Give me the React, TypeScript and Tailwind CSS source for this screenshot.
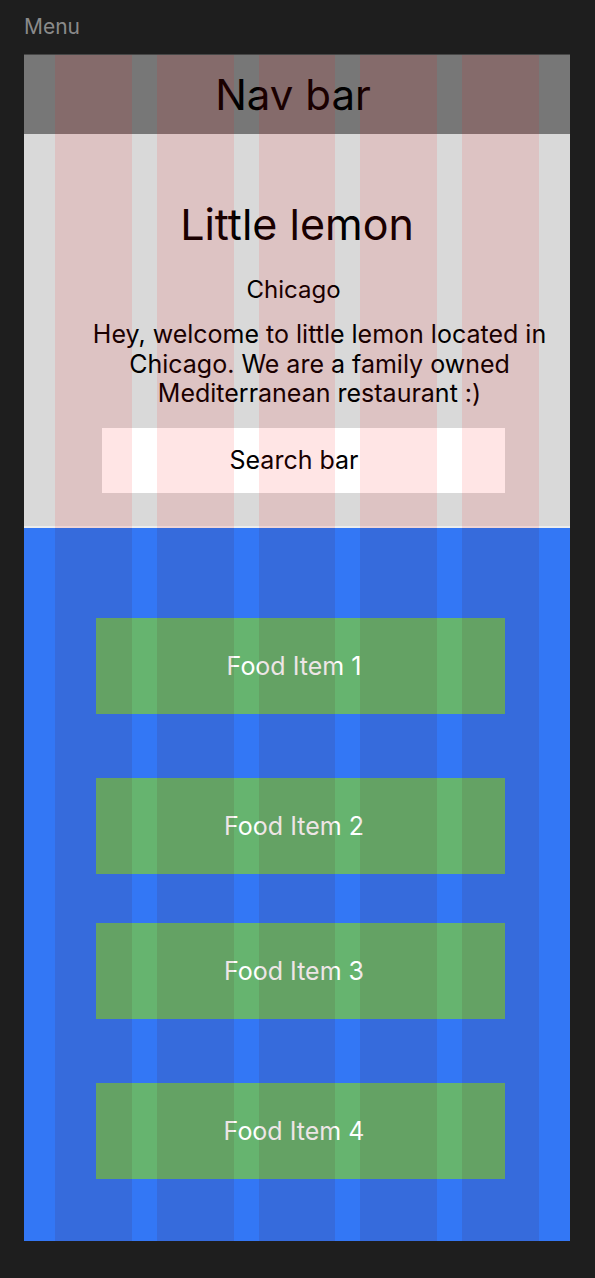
import React from 'react';

const foodItems = [
  { name: 'Food Item 1', gap: 'mt-0' },
  { name: 'Food Item 2', gap: 'mt-[64px]' },
  { name: 'Food Item 3', gap: 'mt-[49px]' },
  { name: 'Food Item 4', gap: 'mt-[64px]' },
];

// layout grid columns drawn over a section
const GridOverlay: React.FC<{ tint: string }> = ({ tint }) => (
  <div className="pointer-events-none absolute inset-0 z-10 grid grid-cols-5 gap-x-[25px] px-[31px]">
    {[0, 1, 2, 3, 4].map((i) => (
      <div key={i} className={`h-full ${tint}`} />
    ))}
  </div>
);

const App: React.FC = () => {
  return (
    <div className="min-h-screen bg-[#1e1e1e] px-[24px] pt-[15px] pb-[36px] font-['Inter','Noto_Sans',sans-serif]">
      {/* Frame label */}
      <div className="text-[21px] leading-[24px] text-[#8a8a8a]">Menu</div>

      {/* Frame */}
      <div className="mt-[15px] w-[546px] border-t border-[#474747]">
        <div className="relative">
          <GridOverlay tint="bg-[#ff0000]/10" />

          {/* Nav */}
          <div className="flex h-[79px] items-center justify-center bg-[#777777] pr-[8px]">
            <span className="text-[42px] leading-[50px] text-black">Nav bar</span>
          </div>

          {/* Hero */}
          <div className="flex h-[394px] flex-col border-b-2 border-[#ececec] bg-[#d9d9d9] pt-[65px]">
            <h1 className="text-center text-[43px] leading-[50px] text-black">Little lemon</h1>
            <p className="mt-[26px] pr-[7px] text-center text-[24px] leading-[30px] text-black">Chicago</p>
            <p className="mt-[15px] ml-[63px] w-[465px] text-center text-[25px] leading-[29.5px] text-black">
              Hey, welcome to little lemon located in Chicago. We are a family owned Mediterranean restaurant :)
            </p>
            <div className="mt-[19px] ml-[78px] flex h-[65px] w-[403px] items-center justify-center bg-white pr-[19px]">
              <span className="text-[25px] leading-[30px] text-black">Search bar</span>
            </div>
          </div>
        </div>

        {/* Menu list */}
        <div className="relative flex h-[713px] flex-col bg-[#3377f5] pt-[90px]">
          <GridOverlay tint="bg-[#500000]/10" />
          {foodItems.map((item) => (
            <div
              key={item.name}
              className={`${item.gap} ml-[72px] flex h-[96px] w-[409px] items-center justify-center bg-[#66b46f] pr-[13px]`}
            >
              <span className="text-[25px] leading-[30px] text-white">{item.name}</span>
            </div>
          ))}
        </div>
      </div>
    </div>
  );
};

export default App;
